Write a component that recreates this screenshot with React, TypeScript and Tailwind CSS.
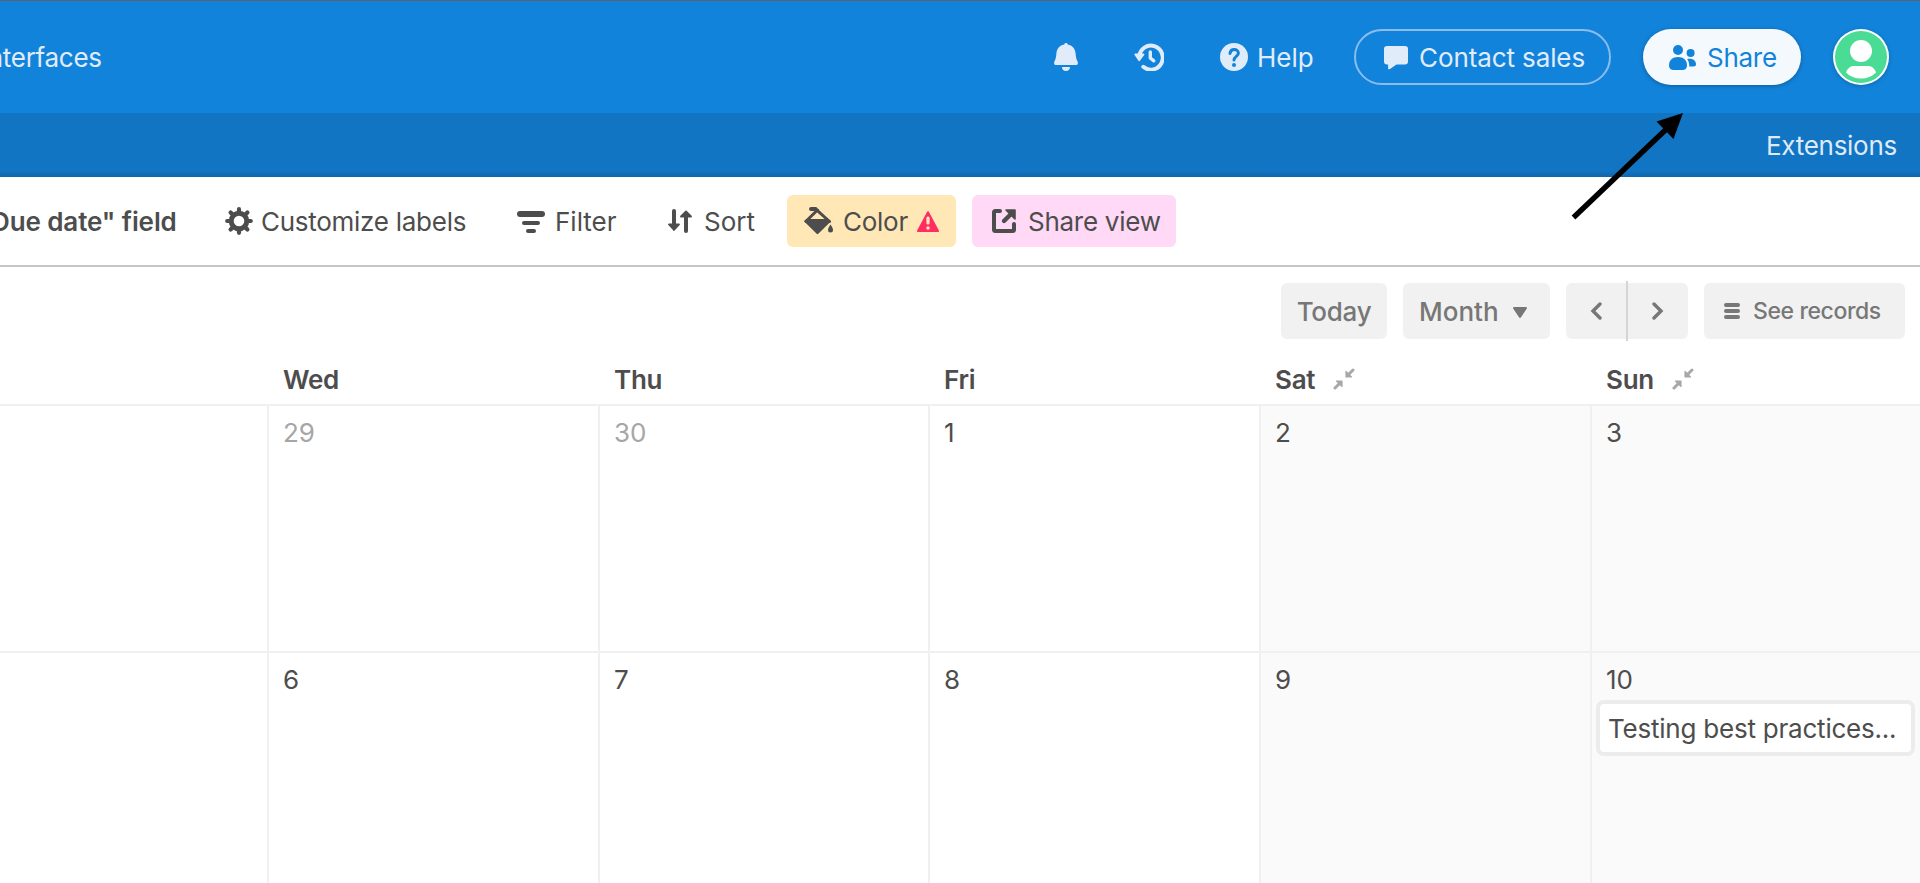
import React from 'react';

interface IconProps {
  className?: string;
}

const BellIcon: React.FC<IconProps> = ({ className }) => (
  <svg className={className} viewBox="0 0 24 28" fill="currentColor">
    <path d="M12 0c-1 0-1.700.7-1.700 1.600C5.600 2.400 2.800 6 2.400 10.500 2 15 1.500 16.500.4 18.400-.4 20.300.3 22 2 22h20c1.700 0 2.400-1.700 1.600-3.600-1.100-1.900-1.600-3.400-2-7.900-.4-4.500-3.200-8.100-7.900-8.900C13.700.7 13 0 12 0zM8 24h8c0 2.500-1.700 4-4 4s-4-1.500-4-4z" />
  </svg>
);

const HistoryIcon: React.FC<IconProps> = ({ className }) => (
  <svg className={className} viewBox="0 0 30 28" fill="none" stroke="currentColor" strokeWidth="4" strokeLinecap="round" strokeLinejoin="round">
    <path d="M5.200 13.500A11.800 12 0 1 1 9.300 23.800" />
    <path d="M1.300 11.500h8.200l-4.300 5.800z" fill="currentColor" strokeWidth="1.800" />
    <path d="M16.300 9v6l3.500 2.800" strokeWidth="3.400" />
  </svg>
);

const HelpIcon: React.FC<IconProps> = ({ className }) => (
  <svg className={className} viewBox="0 0 28 28" fill="none">
    <circle cx="14" cy="14" r="14" fill="currentColor" />
    <path d="M10 10.400c.3-2.600 2-3.900 4.200-3.900 2.400 0 4.200 1.500 4.200 3.700 0 3-4.400 3.300-4.400 6.800" stroke="#1283da" strokeWidth="3" strokeLinecap="round" />
    <circle cx="14" cy="22" r="2" fill="#1283da" />
  </svg>
);

const ChatIcon: React.FC<IconProps> = ({ className }) => (
  <svg className={className} viewBox="0 0 24 24" fill="currentColor">
    <path d="M3 0h18a3 3 0 0 1 3 3v12.500a3 3 0 0 1-3 3h-8.500L6 23c-.9.600-1.900.2-1.900-.8v-3.700H3a3 3 0 0 1-3-3V3a3 3 0 0 1 3-3z" />
  </svg>
);

const PeopleIcon: React.FC<IconProps> = ({ className }) => (
  <svg className={className} viewBox="0 0 27 25" fill="currentColor">
    <circle cx="9" cy="5" r="5" />
    <circle cx="21.600" cy="8" r="4" />
    <path d="M0 20.500C0 15 3.500 12 9 12s9 3 9 8.500c0 3-2 4.500-4.500 4.500h-9C2 25 0 23.500 0 20.500z" />
    <path d="M18.200 14.200c4.400-1.400 8.800.8 8.800 5 0 1.300-.9 2.300-2.300 2.300h-4.500c.2-3-.5-5.300-2-7.300z" />
  </svg>
);

const GearIcon: React.FC<IconProps> = ({ className }) => (
  <svg className={className} viewBox="0 0 28 28" fill="none" stroke="currentColor">
    <circle cx="14" cy="14" r="7.800" strokeWidth="5" />
    <path d="M14 2.200v4M14 21.800v4M2.200 14h4M21.800 14h4M5.600 5.600l3 3M19.400 19.400l3 3M22.400 5.600l-3 3M8.600 19.400l-3 3" strokeWidth="4.200" strokeLinecap="round" />
  </svg>
);

const FilterIcon: React.FC<IconProps> = ({ className }) => (
  <svg className={className} viewBox="0 0 28 22" fill="currentColor">
    <rect x="0" y="0" width="28" height="6" rx="3" />
    <rect x="5" y="10" width="18" height="4" rx="2" />
    <rect x="9" y="18" width="10" height="4" rx="2" />
  </svg>
);

const SortIcon: React.FC<IconProps> = ({ className }) => (
  <svg className={className} viewBox="0 0 24 24" fill="currentColor" stroke="currentColor" strokeLinecap="round" strokeLinejoin="round">
    <path d="M6 2v14M18 22V8" strokeWidth="4" />
    <path d="M1 15.500h10L6 21zM13 7.500h10L18 2.500z" strokeWidth="1.800" />
  </svg>
);

const PaintIcon: React.FC<IconProps> = ({ className }) => (
  <svg className={className} viewBox="0 0 30 28" fill="none">
    <path d="M7 2h4.500" stroke="currentColor" strokeWidth="4" strokeLinecap="round" />
    <path d="M11.500 1.800L25.500 14.500M13.500 3L2 14.200" stroke="currentColor" strokeWidth="3" strokeLinejoin="round" strokeLinecap="round" />
    <path d="M0 14.200L2.500 12H24.500L27 14.200 14.300 26.700c-.6.600-1 .6-1.600 0z" fill="currentColor" />
    <path d="M26.500 17.500c1.500 2.200 2.500 3.800 2.500 5.600a2.500 2.500 0 0 1-5 0c0-1.800 1-3.400 2.500-5.600z" fill="currentColor" />
  </svg>
);

const WarningIcon: React.FC<IconProps> = ({ className }) => (
  <svg className={className} viewBox="0 0 22 21">
    <path d="M11 1.200L21 20H1z" fill="#ff2d62" stroke="#ff2d62" strokeWidth="2" strokeLinejoin="round" />
    <rect x="9.400" y="5.500" width="3.200" height="8" rx="1.500" fill="#ffe8b6" />
    <circle cx="11" cy="17" r="1.700" fill="#ffe8b6" />
  </svg>
);

const ShareViewIcon: React.FC<IconProps> = ({ className }) => (
  <svg className={className} viewBox="0 0 24 24" fill="none" stroke="currentColor" strokeLinecap="round" strokeLinejoin="round">
    <path d="M8 2H3.500A1.500 1.500 0 0 0 2 3.500v17A1.500 1.500 0 0 0 3.500 22h17a1.500 1.500 0 0 0 1.500-1.500V15" strokeWidth="4" />
    <path d="M12 12l7-7" strokeWidth="4.400" />
    <path d="M14 1h9v9z" fill="currentColor" strokeWidth="1.600" />
  </svg>
);

const CollapseIcon: React.FC<IconProps> = ({ className }) => (
  <svg className={className} viewBox="0 0 22 22" fill="#a8a8a8" stroke="#a8a8a8" strokeLinecap="round" strokeLinejoin="round">
    <path d="M20 2l-4 4M2 20l4-4" strokeWidth="3" />
    <path d="M13 3.500V9h5.500zM3.500 13H9v5.500z" strokeWidth="1.200" />
  </svg>
);

const Avatar: React.FC = () => (
  <svg className="h-14 w-14" viewBox="0 0 56 56">
    <circle cx="28" cy="28" r="28" fill="#fff" />
    <circle cx="28" cy="28" r="26" fill="#4adc94" />
    <circle cx="28" cy="22" r="11" fill="#fff" />
    <path d="M13 43.500c1.500-4 4-6.500 8-6.500h14c4 0 6.500 2.500 8 6.500-4 4-9 6-15 6s-11-2-15-6z" fill="#fff" />
  </svg>
);

interface Day {
  label: string;
  muted?: boolean;
  weekend?: boolean;
  event?: string;
}

const weekdays = [
  { label: '', weekend: false },
  { label: 'Wed', weekend: false },
  { label: 'Thu', weekend: false },
  { label: 'Fri', weekend: false },
  { label: 'Sat', weekend: true },
  { label: 'Sun', weekend: true },
];

const weeks: Day[][] = [
  [
    { label: '' },
    { label: '29', muted: true },
    { label: '30', muted: true },
    { label: '1' },
    { label: '2', weekend: true },
    { label: '3', weekend: true },
  ],
  [
    { label: '' },
    { label: '6' },
    { label: '7' },
    { label: '8' },
    { label: '9', weekend: true },
    { label: '10', weekend: true, event: 'Testing best practices...' },
  ],
];

const Header: React.FC = () => (
  <header className="flex h-[113px] items-center border-t border-[#5f6368] bg-[#1283da] text-[#e1ecfa]">
    <span className="mt-0.5 -ml-[19px] w-[120px]">Interfaces</span>
    <BellIcon className="ml-[953px] h-7 w-6" />
    <HistoryIcon className="ml-14 h-7 w-[30px]" />
    <HelpIcon className="ml-14 h-7 w-7" />
    <span className="mt-0.5 ml-[9px] w-[97px] tracking-normal">Help</span>
    <button className="flex h-14 w-[257px] items-center rounded-full border-2 border-[#8abdec] pl-7">
      <ChatIcon className="mt-0.5 h-6 w-6" />
      <span className="mt-0.5 ml-[11px] tracking-[-0.1px]">Contact sales</span>
    </button>
    <button className="ml-8 flex h-14 w-[158px] items-center rounded-full bg-[#f4f9fe] pl-[26px] text-[#1283da] shadow-[0_1px_4px_rgba(0,0,0,0.3)]">
      <PeopleIcon className="h-[25px] w-[27px]" />
      <span className="mt-0.5 ml-[11px]">Share</span>
    </button>
    <div className="ml-8 rounded-full shadow-[0_1px_4px_rgba(0,0,0,0.2)]">
      <Avatar />
    </div>
  </header>
);

const Toolbar: React.FC = () => (
  <div className="flex h-[90px] items-center border-b-2 border-[#c6c6c6] text-[#4d4d4d]">
    <span className="mt-0.5 -ml-[9px] w-[234px] font-semibold tracking-[-0.1px]">Due date" field</span>
    <GearIcon className="h-7 w-7" />
    <span className="mt-0.5 ml-2 w-[256px]">Customize labels</span>
    <FilterIcon className="mt-px h-[22px] w-7" />
    <span className="mt-0.5 ml-2.5 w-[113px] tracking-normal">Filter</span>
    <SortIcon className="h-6 w-6" />
    <span className="mt-0.5 ml-3 w-[83px] tracking-normal">Sort</span>
    <button className="flex h-[52px] w-[169px] items-center rounded-md bg-[#ffe8b6] pl-[17px] text-left">
      <PaintIcon className="h-7 w-[30px]" />
      <span className="mt-0.5 ml-[9px] w-[74px]">Color</span>
      <WarningIcon className="h-[21px] w-[22px]" />
    </button>
    <button className="ml-4 flex h-[52px] w-[204px] items-center rounded-md bg-[#ffd9f5] pl-5">
      <ShareViewIcon className="h-6 w-6" />
      <span className="mt-0.5 ml-3">Share view</span>
    </button>
  </div>
);

const CalendarControls: React.FC = () => (
  <div className="flex h-[88px] items-center justify-end gap-4 pr-[15px] font-medium text-[#777]">
    <button className="h-14 w-[106px] rounded-md bg-[#f1f1f1] pt-0.5">Today</button>
    <button className="flex h-14 w-[147px] items-center rounded-md bg-[#f1f1f1] pl-4">
      <span className="mt-0.5 w-[94px] text-left tracking-normal">Month</span>
      <svg className="mt-0.5 h-[11px] w-[14px]" viewBox="0 0 14 11" fill="currentColor">
        <path d="M1.200 0h11.600c1 0 1.500 1 .9 1.800L8 10.300c-.5.800-1.500.8-2 0L.3 1.800C-.3 1 .2 0 1.200 0z" />
      </svg>
    </button>
    <div className="flex h-[60px] w-[122px] items-center">
      <button className="flex h-14 w-[60px] items-center justify-center rounded-l-md bg-[#f1f1f1]">
        <svg className="h-[18px] w-3" viewBox="0 0 12 18" fill="none" stroke="currentColor" strokeWidth="3.400" strokeLinecap="round">
          <path d="M10 2L3 9l7 7" />
        </svg>
      </button>
      <span className="h-[60px] w-0.5 bg-[#d5d5d5]" />
      <button className="flex h-14 w-[60px] items-center justify-center rounded-r-md bg-[#f1f1f1]">
        <svg className="h-[18px] w-3" viewBox="0 0 12 18" fill="none" stroke="currentColor" strokeWidth="3.400" strokeLinecap="round">
          <path d="M2 2l7 7-7 7" />
        </svg>
      </button>
    </div>
    <button className="flex h-14 w-[201px] items-center rounded-md bg-[#f1f1f1] pl-5 text-[23px] tracking-[-0.4px]">
      <svg className="h-4 w-4" viewBox="0 0 16 16" fill="currentColor">
        <rect width="16" height="4" rx="2" />
        <rect y="6" width="16" height="4" rx="2" />
        <rect y="12" width="16" height="4" rx="2" />
      </svg>
      <span className="ml-[13px]">See records</span>
    </button>
  </div>
);

const DayCell: React.FC<{ day: Day }> = ({ day }) => (
  <div className={`h-[247px] border-r-2 border-b-2 border-[#f0f0f0] pt-[11px] ${day.weekend ? 'bg-[#fafafa]' : 'bg-white'}`}>
    <div className={`ml-3.5 h-8 leading-8 tracking-normal ${day.muted ? 'text-[#a6a6a6]' : 'text-[#4d4d4d]'}`}>{day.label}</div>
    {day.event && (
      <div className="mt-1 ml-1 flex h-14 w-[319px] items-center rounded-lg border-4 border-[#ececec] bg-white pt-0.5 pl-2 tracking-[-0.22px] whitespace-nowrap text-[#4d4d4d]">
        {day.event}
      </div>
    )}
  </div>
);

const Calendar: React.FC = () => (
  <section>
    <div className="grid h-[51px] grid-cols-[269px_331px_330px_331px_331px_330px] border-b-2 border-[#f0f0f0] font-semibold text-[#4d4d4d]">
      {weekdays.map((day, index) => (
        <div key={index} className="flex items-center pl-3.5">
          {day.label}
          {day.weekend && <CollapseIcon className="mb-0.5 ml-[18px] h-[22px] w-[22px]" />}
        </div>
      ))}
    </div>
    {weeks.map((week, index) => (
      <div key={index} className="grid grid-cols-[269px_331px_330px_331px_331px_330px]">
        {week.map((day, i) => (
          <DayCell key={i} day={day} />
        ))}
      </div>
    ))}
  </section>
);

const App: React.FC = () => {
  return (
    <div className="relative h-[883px] w-[1920px] overflow-hidden bg-white font-[Inter,sans-serif] text-[26px] leading-8 tracking-[-0.27px] whitespace-nowrap">
      <Header />
      <div className="flex h-16 items-center justify-end bg-linear-to-b from-[#1275c4] from-90% to-[#0f66ac] pt-0.5 pr-[23px] text-[#dfeaf7]">
        Extensions
      </div>
      <Toolbar />
      <CalendarControls />
      <Calendar />
      {/* pointer towards the Share button */}
      <svg className="absolute top-[112px] left-[1568px] h-[110px] w-[118px]" viewBox="0 0 118 110">
        <path d="M5.500 105.500L100 15.500" stroke="#000" strokeWidth="5.400" />
        <path d="M115 1L88.500 9.500l17 17.500z" fill="#000" />
      </svg>
    </div>
  );
};

export default App;
